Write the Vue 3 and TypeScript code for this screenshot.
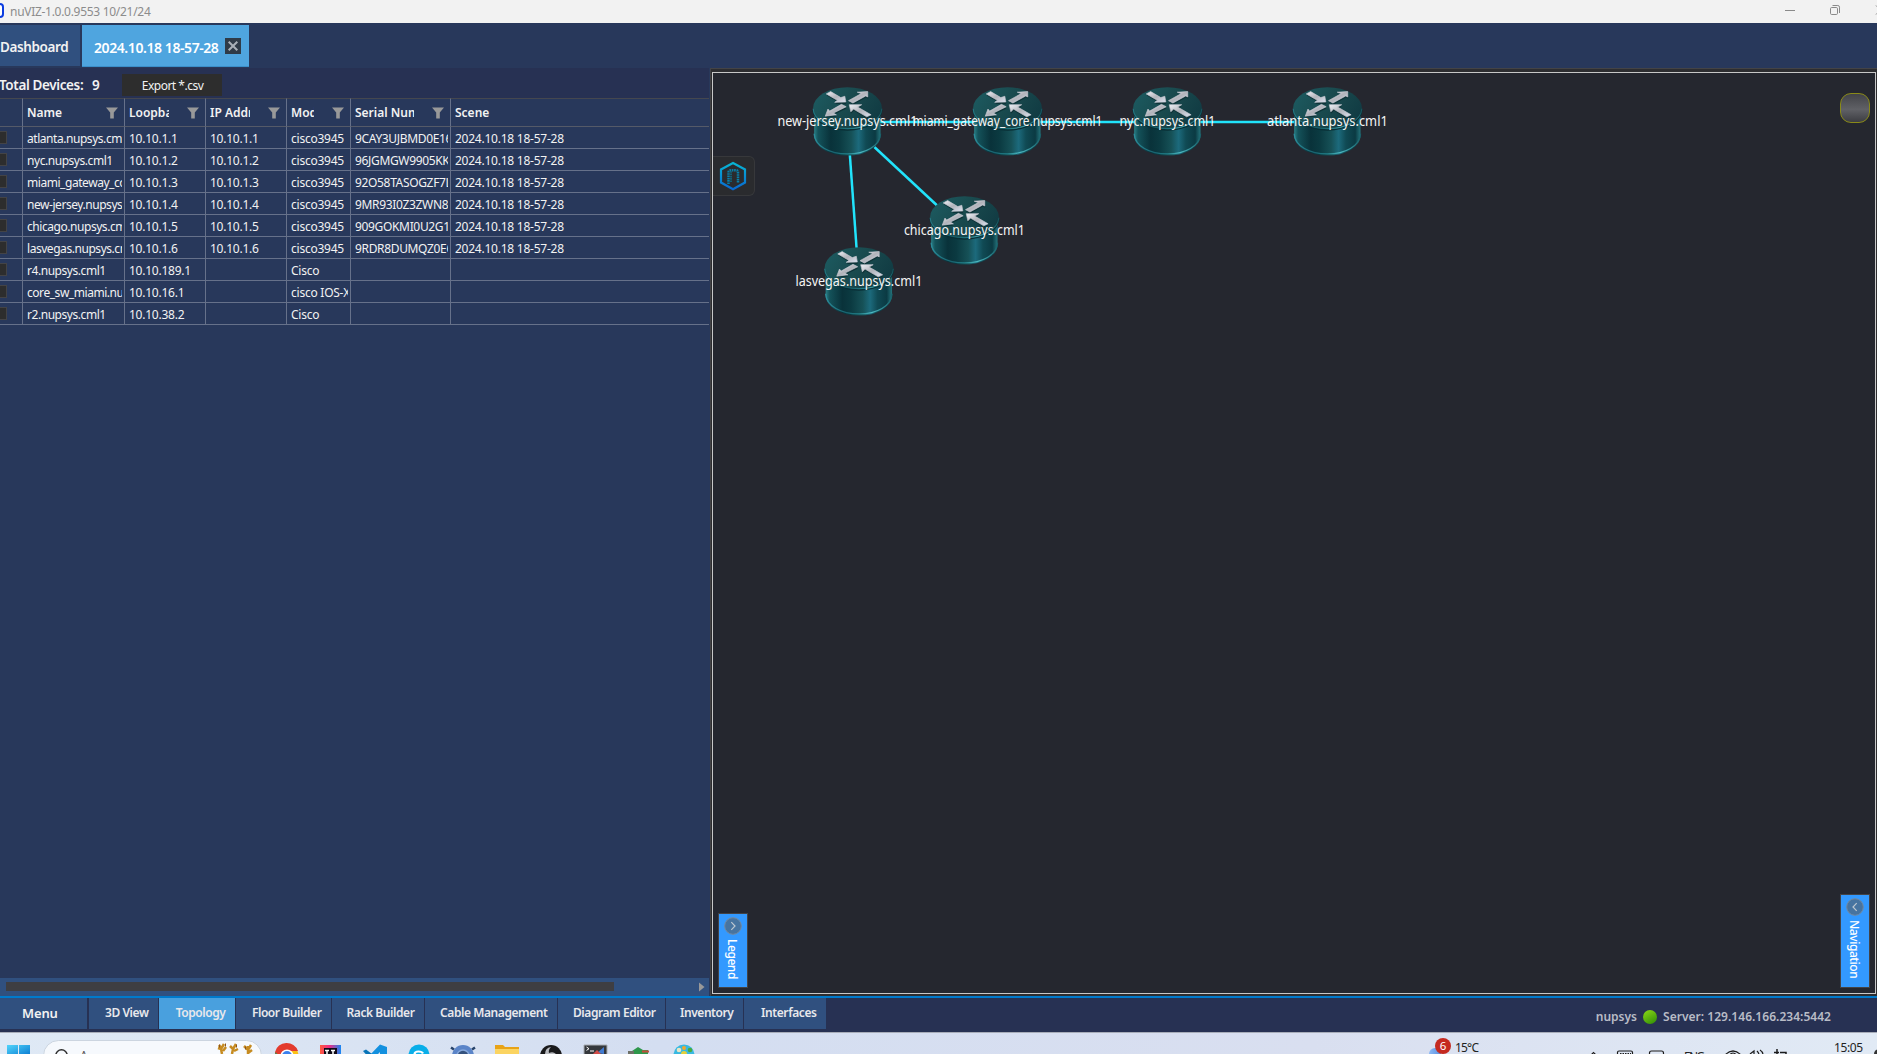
<script setup lang="ts">
interface Device {
  name: string
  loopback: string
  ip: string
  model: string
  serial: string
  scene: string
}
interface RouterNode { label: string; x: number; y: number; w: number }

const scene = '2024.10.18 18-57-28'
const headers = ['Name', 'Loopback', 'IP Address', 'Model', 'Serial Number', 'Scene']
const devices: Device[] = [
  { name: 'atlanta.nupsys.cml1', loopback: '10.10.1.1', ip: '10.10.1.1', model: 'cisco3945', serial: '9CAY3UJBMD0E16', scene },
  { name: 'nyc.nupsys.cml1', loopback: '10.10.1.2', ip: '10.10.1.2', model: 'cisco3945', serial: '96JGMGW9905KK', scene },
  { name: 'miami_gateway_core', loopback: '10.10.1.3', ip: '10.10.1.3', model: 'cisco3945', serial: '92O58TASOGZF7L', scene },
  { name: 'new-jersey.nupsys.cml1', loopback: '10.10.1.4', ip: '10.10.1.4', model: 'cisco3945', serial: '9MR93I0Z3ZWN8', scene },
  { name: 'chicago.nupsys.cml1', loopback: '10.10.1.5', ip: '10.10.1.5', model: 'cisco3945', serial: '909GOKMI0U2G1', scene },
  { name: 'lasvegas.nupsys.cml1', loopback: '10.10.1.6', ip: '10.10.1.6', model: 'cisco3945', serial: '9RDR8DUMQZ0E6', scene },
  { name: 'r4.nupsys.cml1', loopback: '10.10.189.1', ip: '', model: 'Cisco', serial: '', scene: '' },
  { name: 'core_sw_miami.nupsys', loopback: '10.10.16.1', ip: '', model: 'cisco IOS-XE', serial: '', scene: '' },
  { name: 'r2.nupsys.cml1', loopback: '10.10.38.2', ip: '', model: 'Cisco', serial: '', scene: '' },
]

/* Node centres are relative to the inner corner of the canvas frame. */
const nodes: RouterNode[] = [
  { label: 'new-jersey.nupsys.cml1', x: 134.4, y: 48.5, w: 140 },
  { label: 'miami_gateway_core.nupsys.cml1', x: 294.4, y: 48.5, w: 190 },
  { label: 'nyc.nupsys.cml1', x: 454.4, y: 48.5, w: 96 },
  { label: 'atlanta.nupsys.cml1', x: 614.4, y: 48.5, w: 121 },
  { label: 'chicago.nupsys.cml1', x: 251.4, y: 157.5, w: 121 },
  { label: 'lasvegas.nupsys.cml1', x: 145.9, y: 208.5, w: 127 },
]

const views = [
  { label: '3D View', w: 70 },
  { label: 'Topology', w: 77 },
  { label: 'Floor Builder', w: 96 },
  { label: 'Rack Builder', w: 93 },
  { label: 'Cable Management', w: 133 },
  { label: 'Diagram Editor', w: 108 },
  { label: 'Inventory', w: 78 },
  { label: 'Interfaces', w: 82 },
]
</script>

<template>
  <div class="window">
    <header class="titlebar">
      <span class="app-mark"></span>
      <span class="title">nuVIZ-1.0.0.9553 10/21/24</span>
      <svg class="controls" width="100" height="23" viewBox="0 0 100 23" fill="none" stroke="#8a8a8a">
        <path d="M8 10.500h10" />
        <rect x="53.500" y="7.500" width="7" height="7" rx="1.200" />
        <path d="M55.500 5.500h5.300q1.700 0 1.700 1.700v5.800" />
        <path d="M99 5.500l3 3M99 14.500l3 -3" />
      </svg>
    </header>

    <nav class="tabs">
      <div class="tab home"><span>Dashboard</span></div>
      <div class="tab active">
        <span>2024.10.18 18-57-28</span>
        <svg class="close" width="16" height="16" viewBox="0 0 16 16">
          <rect width="16" height="16" fill="#2f3b48" />
          <path d="M3.700 3.700l8.600 8.600M12.300 3.700l-8.600 8.600" stroke="#a9b0b8" stroke-width="2" />
        </svg>
      </div>
    </nav>

    <main class="main">
      <section class="left">
        <div class="summary">
          <span class="total">Total Devices:</span><span class="count">9</span>
          <button class="export">Export *.csv</button>
        </div>
        <div class="grid">
          <div class="row head">
            <div class="cell"></div>
            <div v-for="(h, i) in headers" :key="h" class="cell">
              <span class="h-label">{{ h }}</span>
              <svg v-if="i < 5" class="filter" width="12" height="12" viewBox="0 0 12 12">
                <path d="M0 0.500h12L7.800 5.500V11.500H4.200V5.500Z" fill="#999" />
              </svg>
            </div>
          </div>
          <div v-for="d in devices" :key="d.name" class="row">
            <div class="cell first"><i class="check"></i></div>
            <div class="cell name"><span>{{ d.name }}</span></div>
            <div class="cell"><span>{{ d.loopback }}</span></div>
            <div class="cell"><span>{{ d.ip }}</span></div>
            <div class="cell"><span>{{ d.model }}</span></div>
            <div class="cell serial"><span>{{ d.serial }}</span></div>
            <div class="cell"><span>{{ d.scene }}</span></div>
          </div>
        </div>
        <div class="hscroll">
          <div class="thumb"></div>
          <svg width="6" height="10" viewBox="0 0 6 10"><path d="M0 0.500L5.500 5L0 9.500Z" fill="#999" /></svg>
        </div>
      </section>

      <section class="right">
        <div class="canvas">
          <svg class="links" width="1162" height="920" viewBox="0 0 1162 920">
            <defs>
              <linearGradient id="body" x1="0" x2="1">
                <stop offset="0" stop-color="#2a7f86" />
                <stop offset=".06" stop-color="#14525a" />
                <stop offset=".25" stop-color="#09323a" />
                <stop offset=".38" stop-color="#0b3a41" />
                <stop offset=".56" stop-color="#165157" />
                <stop offset=".67" stop-color="#1c6a7c" />
                <stop offset=".78" stop-color="#104a54" />
                <stop offset=".92" stop-color="#0b3a43" />
                <stop offset="1" stop-color="#24747c" />
              </linearGradient>
              <linearGradient id="lid" x1="0" x2="1" y1="0.200" y2="0.600">
                <stop offset="0" stop-color="#1c5a60" />
                <stop offset=".5" stop-color="#194a4e" />
                <stop offset="1" stop-color="#113b43" />
              </linearGradient>
              <linearGradient id="rim" x1="0" x2="1">
                <stop offset="0" stop-color="#2c8d9b" />
                <stop offset=".3" stop-color="#186370" />
                <stop offset=".5" stop-color="#218089" />
                <stop offset=".7" stop-color="#4db9c2" />
                <stop offset="1" stop-color="#19616a" />
              </linearGradient>
              <linearGradient id="metal" x1="0" x2="1" y1="0" y2="1">
                <stop offset="0" stop-color="#f0f2f8" />
                <stop offset=".5" stop-color="#b1b3ba" />
                <stop offset="1" stop-color="#dde4f2" />
              </linearGradient>
              <g id="router">
                <path d="M4 68V143C4 180 48 205 103 205S201 180 201 143V68Z" fill="url(#body)" />
                <path d="M4 140C6 177 50 200 103 200S199 177 201 140" fill="none" stroke="url(#rim)" stroke-width="4" />
                <path d="M1 68C2 104 48 129 103 129S204 104 205 68" fill="none" stroke="#092f36" stroke-width="4" />
                <ellipse cx="103" cy="64" rx="102" ry="62" fill="url(#lid)" />
                <path d="M1 66C2 100 48 125 103 125S203 100 205 66" fill="none" stroke="url(#rim)" stroke-width="3" opacity=".75" />
                <g fill="#0b2c31" opacity=".75" transform="translate(1 5)">
                  <path d="M40 22L53 15L83 33L95 29L98 48L65 47L73 41Z" />
                  <path d="M106 42L144 21L132 17L163 15L163 31L157 28L119 49Z" />
                  <path d="M85 53L99 60L61 79L70 84L37 88L45 67L50 73Z" />
                  <path d="M108 54L145 54L133 61L173 84L160 90L121 67L113 75Z" />
                </g>
                <g fill="url(#metal)" stroke="#c8cad2" stroke-width="2" stroke-linejoin="round">
                  <path d="M40 22L53 15L83 33L95 29L98 46L65 47L73 41Z" />
                  <path d="M106 42L144 21L132 17L163 15L163 31L157 28L119 49Z" />
                  <path d="M85 53L99 60L61 79L70 84L37 88L45 67L50 73Z" />
                  <path d="M108 54L145 54L133 61L173 84L160 90L121 67L113 75Z" />
                </g>
              </g>
            </defs>
            <g stroke="#21e3fb" stroke-width="2.500">
              <path d="M134.500 49H614.500" />
              <path d="M134.500 49L251.500 158" />
              <path d="M134.500 49L146 209" />
            </g>
            <use v-for="n in nodes" :key="n.label" href="#router" :transform="`translate(${n.x - 34.6} ${n.y - 35}) scale(0.337)`" />
            <text v-for="n in nodes" :key="n.label + '-t'" class="node-label" :x="n.x" :y="n.y + 4.300" :textLength="n.w" lengthAdjust="spacingAndGlyphs">{{ n.label }}</text>
          </svg>

          <div class="logo">
            <svg width="28" height="32" viewBox="0 0 28 32" fill="none">
              <defs>
                <linearGradient id="hex" x1="0" x2="0" y1="0" y2="1">
                  <stop offset="0" stop-color="#08b5d4" /><stop offset="1" stop-color="#0868d0" />
                </linearGradient>
              </defs>
              <path d="M14 3L26 9.500V22.500L14 29.300L2 22.500V9.500Z" stroke="url(#hex)" stroke-width="2.200" />
              <path d="M9.500 24V12.500q0 -2.300 2.500 -2.300h4.500q2.500 0 2.500 2.300V22.500" stroke="#087fa9" stroke-width="2.500" stroke-dasharray="1.600 .7" />
              <path d="M12 22V11" stroke="#0a7594" stroke-width="1.400" stroke-dasharray="1.600 .7" />
            </svg>
          </div>
          <div class="knob"></div>
          <div class="side-tab legend">
            <svg width="18" height="18" viewBox="0 0 18 18" fill="none">
              <circle cx="9" cy="9" r="8.300" fill="#4774a0" stroke="#74889c" />
              <path d="M7.300 5.200L11 9L7.300 12.800" stroke="#bdc7d0" stroke-width="1.200" />
            </svg>
            <span>Legend</span>
          </div>
          <div class="side-tab navigation">
            <svg width="18" height="18" viewBox="0 0 18 18" fill="none">
              <circle cx="9" cy="9" r="8.300" fill="#4774a0" stroke="#74889c" />
              <path d="M10.700 5.200L7 9L10.700 12.800" stroke="#bdc7d0" stroke-width="1.200" />
            </svg>
            <span>Navigation</span>
          </div>
        </div>
      </section>
    </main>

    <footer class="bottom">
      <div class="menu"><span>Menu</span></div>
      <div v-for="v in views" :key="v.label" class="view" :class="{ on: v.label === 'Topology' }" :style="{ width: v.w + 'px' }">
        <span>{{ v.label }}</span>
      </div>
      <div class="status">
        <span>nupsys</span><i class="led"></i><span class="server">Server: 129.146.166.234:5442</span>
      </div>
    </footer>

    <div class="taskbar">
      <svg width="1877" height="22" viewBox="0 1032 1877 22">
        <defs>
          <linearGradient id="win" x1="0" x2="1" y1="0" y2="1"><stop offset="0" stop-color="#50d4fb" /><stop offset="1" stop-color="#0878d0" /></linearGradient>
          <linearGradient id="jb"><stop offset="0" stop-color="#ff5a3c" /><stop offset=".45" stop-color="#ef2c84" /><stop offset="1" stop-color="#1688f5" /></linearGradient>
          <linearGradient id="cloud"><stop offset="0" stop-color="#8bb9f5" /><stop offset="1" stop-color="#5b8fe0" /></linearGradient>
        </defs>
        <path d="M7 1045h11v11H7zM19 1045h11v11H19z" fill="url(#win)" />
        <rect x="43.500" y="1040.500" width="218" height="30" rx="15" fill="#f6f9fd" stroke="#ccd5e0" />
        <circle cx="61.500" cy="1055.500" r="5.700" fill="none" stroke="#303030" stroke-width="1.500" />
        <text x="80" y="1060" font-size="12" fill="#555">A</text>
        <g fill="none" stroke="#c68b20" stroke-width="2.500">
          <path d="M222 1054l-1 -5l-3 -1M221 1049l3 -5M219 1045l2 3M226 1047l-3 4M232 1054l1 -5l3 -5M233 1049l-3 -3M234 1051l4 -2M248 1054v-8M244 1046l4 4l3 -5M252 1050l-4 3" />
          <path d="M219 1046h1M225 1045h1M236 1046h1M245 1048h1" stroke="#8c5419" stroke-width="3" />
        </g>
        <circle cx="287" cy="1055.500" r="11.500" fill="#fbc116" />
        <path d="M275 1060V1052A12 12 0 0 1 298 1051H287L281 1058Z" fill="#e33b2e" />
        <path d="M275.500 1052L282 1060H275Z" fill="#23a455" />
        <circle cx="287" cy="1056" r="5.800" fill="#3b80ee" stroke="#fff" stroke-width="1.500" />
        <rect x="320" y="1045" width="21" height="14" fill="url(#jb)" />
        <rect x="324" y="1048" width="13" height="10" fill="#100c18" />
        <path d="M325 1050.500h4M327 1050v5M331 1050.500h4M333 1050v5" stroke="#fff" stroke-width="1.500" />
        <path d="M380 1044.500l7 2.500v9h-7v-4l-4 4h-7z" fill="#1390df" />
        <path d="M363 1051l3 -1.500l8 6h-7z" fill="#0874b7" />
        <circle cx="419" cy="1055" r="10.500" fill="#09aee9" />
        <path d="M423 1053.500q-1 -2 -4.500 -2q-4 0 -4 3" fill="none" stroke="#fff" stroke-width="2.200" />
        <circle cx="463" cy="1056" r="11" fill="#5a84c8" />
        <circle cx="463" cy="1056" r="6" fill="#34527e" stroke="#86a8dc" stroke-width="1.500" />
        <path d="M451 1047.500l3 2M475 1047.500l-3 2" stroke="#27436a" stroke-width="2.500" />
        <path d="M495 1054v-9h8l2 2h14v7z" fill="#e8a317" />
        <path d="M495 1049h24v6H495z" fill="#fbd461" />
        <circle cx="551" cy="1056" r="11" fill="#19191b" />
        <path d="M545 1054q0 -6 6 -7q-3 3 -2 6q4 -2 7 1" fill="#b9bbc0" />
        <path d="M584 1045h23v10h-23z" fill="#35383c" stroke="#aaaeb4" />
        <path d="M586.500 1047l2.500 1.700l-2.500 1.700M590 1051h4" fill="none" stroke="#fff" />
        <path d="M597 1053l7 -6v7z" fill="#427bd1" /><path d="M593 1054l4 -4l4 4z" fill="#d14c48" />
        <path d="M633 1054v-3h-1l6 -4l5 3h5v4z" fill="#2e974b" /><path d="M628 1051h6v3h-6z" fill="#6e7067" /><path d="M642 1050.500h7v2h-7z" fill="#c24e3c" />
        <circle cx="684" cy="1055" r="10.500" fill="#38b9e1" />
        <circle cx="679" cy="1050" r="2.300" fill="#e9e5c5" /><circle cx="684" cy="1048" r="2" fill="#f3a82b" /><circle cx="690" cy="1050" r="2.300" fill="#4bab3f" /><circle cx="684" cy="1054" r="3" fill="#e4d13b" />
        <circle cx="1435" cy="1054" r="6" fill="url(#cloud)" />
        <circle cx="1443" cy="1046" r="8" fill="#c52a20" />
        <text x="1443" y="1050.300" text-anchor="middle" font-size="11.500" fill="#fff">6</text>
        <text x="1455" y="1052" font-size="12" fill="#222" textLength="24">15°C</text>
        <text x="1834" y="1052" font-size="12" fill="#222" textLength="29">15:05</text>
        <g fill="none" stroke="#1c1c1c" stroke-width="1.200">
          <path d="M1590 1056l3.500 -3.500l3.500 3.500" />
          <rect x="1617.500" y="1051" width="15" height="10" rx="1.500" />
          <path d="M1620 1053.500h11" stroke-dasharray="1.500 1" />
          <rect x="1649.500" y="1051" width="14" height="10" rx="2" />
          <path d="M1725 1055q8 -8 16 0" /><circle cx="1733" cy="1056" r="3" />
          <path d="M1750 1054l4 -3v5M1757 1051q2 2 2 4M1760 1050q3 2 3 5" />
          <path d="M1774 1052.500h5M1777 1049v5M1780 1052.500h6v3" stroke-width="1.500" />
        </g>
        <text x="1684" y="1061" font-size="12" fill="#222" textLength="21">ENG</text>
        <circle cx="1879" cy="1054" r="5" fill="#333" />
      </svg>
    </div>
  </div>
</template>

<style>
html, body { margin: 0; overflow: hidden; background: #28385b; }
</style>

<style scoped>
.window {
  width: 1877px; height: 1054px; overflow: hidden;
  display: flex; flex-direction: column;
  font-family: "Noto Sans", "Open Sans", sans-serif; font-size: 12px; color: #f2f2f2;
  background: #28385b;
}
.window span { white-space: nowrap; }
.titlebar { height: 23px; background: #f2f2f2; display: flex; align-items: center; flex: none; }
.app-mark { width: 4px; height: 15px; box-sizing: border-box; border: 2px solid #0b3ce0; border-left: 0; border-radius: 0 4px 4px 0; background: #fff; margin-top: -2px; }
.title { color: #8c8c8c; font-size: 12px; letter-spacing: -.29px; margin-left: 6px; flex: 1; }
.tabs { height: 45px; flex: none; display: flex; gap: 2px; padding-top: 2px; box-sizing: border-box; }
.tab { box-sizing: border-box; height: 42px; font-weight: 600; font-size: 14px; display: flex; align-items: center; }
.home { width: 80px; background: #30507f; height: 41px; font-size: 13.5px; letter-spacing: -.38px; padding-top: 3px; }
.active { width: 167px; background: #4fa5df; border-bottom: 1px solid #3b8fca; padding-left: 12px; color: #fff; }
.active span { width: 131px; letter-spacing: -.42px; padding-top: 3px; }
.main { flex: none; height: 928px; display: flex; }
.left { width: 709px; display: flex; flex-direction: column; margin-right: 1px; }
.summary { height: 30px; background: #273153; display: flex; align-items: center; font-size: 13.5px; font-weight: 600; }
.total, .count { padding-top: 3px; }
.total { width: 93px; letter-spacing: -.38px; margin-left: -1px; }
.count { width: 30px; }
.export { width: 100px; height: 22px; margin-top: 4px; border: 0; padding: 0 0 0 1px; background: #2d2d2d; color: #f2f2f2; font: 12px "Noto Sans", sans-serif; letter-spacing: -.5px; }
.grid { height: 880px; }
.row { display: grid; grid-template-columns: 23px 102px 81px 81px 64px 100px 1fr; height: 22px; }
.cell { box-sizing: border-box; border-right: 1px solid #66718a; border-bottom: 1px solid #66718a; padding: 2px 2px 0 4px; display: flex; align-items: center; overflow: hidden; min-width: 0; }
.cell:last-child { border-right: 0; }
.cell span { overflow: hidden; width: 100%; letter-spacing: -.24px; line-height: 19px; }
.name span { letter-spacing: -.45px; }
.serial span { letter-spacing: -.34px; }
.head { height: 29px; font-weight: 600; border-top: 0; }
.head .cell { border-top: 1px solid #45474f; border-bottom-color: #555a68; padding: 0 6px 0 4px; }
.cell .h-label { width: auto; flex: 1; min-width: 0; margin-right: 18px; letter-spacing: 0; }
.filter { flex: none; }
.cell.first { padding: 0; }
.check { width: 7px; height: 13px; box-sizing: border-box; background: #2d2d2d; border: 1px solid #434346; border-left: 0; }
.hscroll { height: 18px; background: #30507f; display: flex; align-items: center; }
.thumb { width: 608px; height: 9px; background: #3e3e42; margin: 0 85px 2px 6px; }
.right { flex: 1; background: #2d2d30; border-left: 1px solid #434346; border-top: 1px solid #434346; padding: 3px 1px 1px 1px; box-sizing: border-box; }
.canvas { position: relative; box-sizing: border-box; height: 922px; width: 1164px; border: 1px solid #c8c8c8; background: #25272f; }
.links { display: block; }
.node-label { fill: #f5f5f5; font-size: 14px; text-anchor: middle; }
.logo { position: absolute; left: 0; top: 83px; width: 35px; height: 38px; border: 1px solid #37383b; border-left: 0; border-radius: 0 6px 6px 0; background: #2a2b2e; display: flex; align-items: center; padding-left: 6px; }
.knob { position: absolute; left: 1127px; top: 20px; width: 28px; height: 28px; border: 1px solid #8a8a18; border-radius: 11px; background: linear-gradient(#424348, #606166 55%, #3c3d42); }
.side-tab { position: absolute; box-sizing: border-box; width: 30px; border: 1px solid #434346; background: #3399ff; display: flex; flex-direction: column; align-items: center; padding-top: 3px; gap: 4px; }
.side-tab span { writing-mode: vertical-rl; font-size: 12px; font-weight: 500; line-height: 16px; margin-right: 3px; color: #fff; letter-spacing: -.45px; }
.legend { left: 5px; top: 840px; height: 75px; }
.navigation { left: 1127px; top: 821px; height: 94px; }
.bottom { flex: none; height: 36px; border-top: 2px solid #007acc; box-sizing: border-box; background: #273153; display: flex; font-weight: 600; }
.menu { width: 87px; height: 31px; background: #30507f; margin-right: 2px; display: flex; align-items: center; padding-left: 22px; box-sizing: border-box; font-size: 13px; }
.menu span { padding-bottom: 1px; letter-spacing: -.15px; }
.view { box-sizing: border-box; height: 31px; background: #30507f; border-right: 1px solid #273153; display: flex; align-items: center; justify-content: flex-end; padding: 0 9.5px 2px 0; }
.view:nth-last-child(2) { border-right: 0; }
.view span { letter-spacing: -.42px; color: #e8e8ec; }
.view.on { background: #49a0de; }
.status { margin-left: auto; margin-right: 46px; display: flex; align-items: center; color: #b9bcc6; padding-top: 3px; }
.led { width: 14px; height: 14px; border-radius: 50%; margin: 0 6px; background: linear-gradient(150deg, #8edb17, #2d8b05); }
.server { letter-spacing: .03px; }
.taskbar { height: 22px; background: linear-gradient(90deg, #dfe9f5, #d4def1 35%, #d9dff0 70%, #e1eaf5); box-shadow: inset 0 1px #a8adb9; }
.taskbar svg { display: block; }
</style>
